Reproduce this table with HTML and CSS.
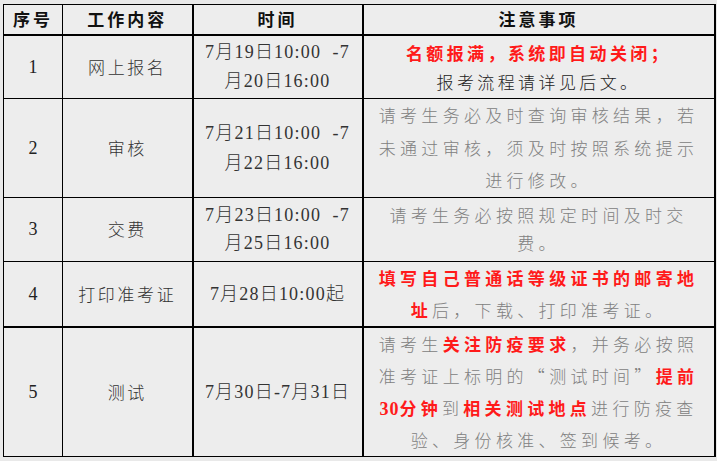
FILE: index.html
```html
<!DOCTYPE html>
<html lang="zh-CN">
<head>
<meta charset="utf-8">
<title>报名安排</title>
<link rel="stylesheet" href="styles.css">
</head>
<body>
<table class="sched">
  <colgroup>
    <col class="c-no">
    <col class="c-work">
    <col class="c-time">
    <col class="c-note">
  </colgroup>
  <thead>
    <tr class="head">
      <th class="th-no">序号</th>
      <th class="th-work">工作内容</th>
      <th class="th-time">时间</th>
      <th class="th-note">注意事项</th>
    </tr>
  </thead>
  <tbody>
    <tr class="r1">
      <td class="no">1</td>
      <td class="work">网上报名</td>
      <td class="time"><span class="ln">7月19日10:00&nbsp; -7</span><span class="ln">月20日16:00</span></td>
      <td class="note n1"><span class="ln red">名额报满，系统即自动关闭；</span><span class="ln dark">报考流程请详见后文。</span></td>
    </tr>
    <tr class="r2">
      <td class="no">2</td>
      <td class="work">审核</td>
      <td class="time t2"><span class="ln">7月21日10:00&nbsp; -7</span><span class="ln">月22日16:00</span></td>
      <td class="note n2"><span class="ln">请考生务必及时查询审核结果，若</span><span class="ln">未通过审核，须及时按照系统提示</span><span class="ln">进行修改。</span></td>
    </tr>
    <tr class="r3">
      <td class="no">3</td>
      <td class="work">交费</td>
      <td class="time t3"><span class="ln">7月23日10:00&nbsp; -7</span><span class="ln">月25日16:00</span></td>
      <td class="note n3"><span class="ln">请考生务必按照规定时间及时交</span><span class="ln">费。</span></td>
    </tr>
    <tr class="r4">
      <td class="no">4</td>
      <td class="work">打印准考证</td>
      <td class="time">7月28日10:00起</td>
      <td class="note n4"><span class="ln red">填写自己普通话等级证书的邮寄地</span><span class="ln"><span class="red">址</span>后，下载、打印准考证。</span></td>
    </tr>
    <tr class="r5">
      <td class="no">5</td>
      <td class="work">测试</td>
      <td class="time">7月30日-7月31日</td>
      <td class="note n5"><span class="ln">请考生<span class="red">关注防疫要求</span>，并务必按照</span><span class="ln">准考证上标明的“测试时间”<span class="red">提前</span></span><span class="ln"><span class="red"><span class="num">30</span>分钟</span>到<span class="red">相关测试地点</span>进行防疫查</span><span class="ln">验、身份核准、签到候考。</span></td>
    </tr>
  </tbody>
</table>
</body>
</html>
```

FILE: styles.css
```css
html, body {
  margin: 0;
  padding: 0;
  background: #e9e9e9;
}

body {
  padding: 4px 0 0 3px;
  font-family: "Liberation Serif", "Noto Sans CJK SC", serif;
}

.sched {
  border-collapse: collapse;
  table-layout: fixed;
  width: 712px;
  background: #ededed;
  border-top: 1px solid #000;
  border-left: 1px solid #000;
  border-right: 2px solid #000;
  border-bottom: 1px solid #000;
}

.c-no { width: 59px; }
.c-work { width: 130px; }
.c-time { width: 170px; }
.c-note { width: 352px; }

.sched th,
.sched td {
  border: 1px solid #000;
  padding: 0;
  text-align: center;
  vertical-align: middle;
  overflow: visible;
}

.head { height: 30px; }
.r1 { height: 64px; }
.r2 { height: 98px; }
.r3 { height: 64px; }
.r4 { height: 64px; }
.r5 { height: 129px; }

.head th {
  border-bottom: 2px solid #000;
  font-family: "Noto Sans CJK SC", sans-serif;
  font-weight: 700;
  font-size: 17px;
  letter-spacing: 3px;
  color: #111;
  line-height: 24px;
}

.th-time,
.time,
.th-note,
.note {
  border-left: 2px solid #000 !important;
}

.r4 td {
  border-bottom: 2px solid #000;
}

.ln {
  display: block;
  white-space: nowrap;
  height: 29px;
  line-height: 29px;
}

.no {
  font-size: 18px;
  color: #222;
  line-height: 24px;
}

.work {
  font-family: "Noto Sans CJK SC", sans-serif;
  font-weight: 300;
  font-size: 17px;
  letter-spacing: 2.6px;
  color: #333;
  line-height: 24px;
}

.time {
  font-size: 18px;
  font-weight: 300;
  letter-spacing: 1.2px;
  color: #333;
  line-height: 24px;
}

.t2 .ln { height: 30px; line-height: 30px; }
.t3 .ln { height: 28px; line-height: 28px; }

.note {
  font-family: "Noto Sans CJK SC", sans-serif;
  font-weight: 300;
  font-size: 17px;
  letter-spacing: 4.3px;
  color: #808080;
  line-height: 24px;
}

.n1 { letter-spacing: 3.4px; }
.n2 .ln { height: 32.5px; line-height: 32.5px; }
.n3 .ln { height: 28px; line-height: 28px; }
.n4 .ln { height: 32px; line-height: 32px; }
.n5 .ln { height: 32px; line-height: 32px; }

.red {
  color: #ff1a1a;
  font-weight: 700;
}

.num {
  font-family: "Liberation Serif", serif;
  font-size: 18px;
  letter-spacing: 1px;
}

.dark {
  color: #222;
}
```
